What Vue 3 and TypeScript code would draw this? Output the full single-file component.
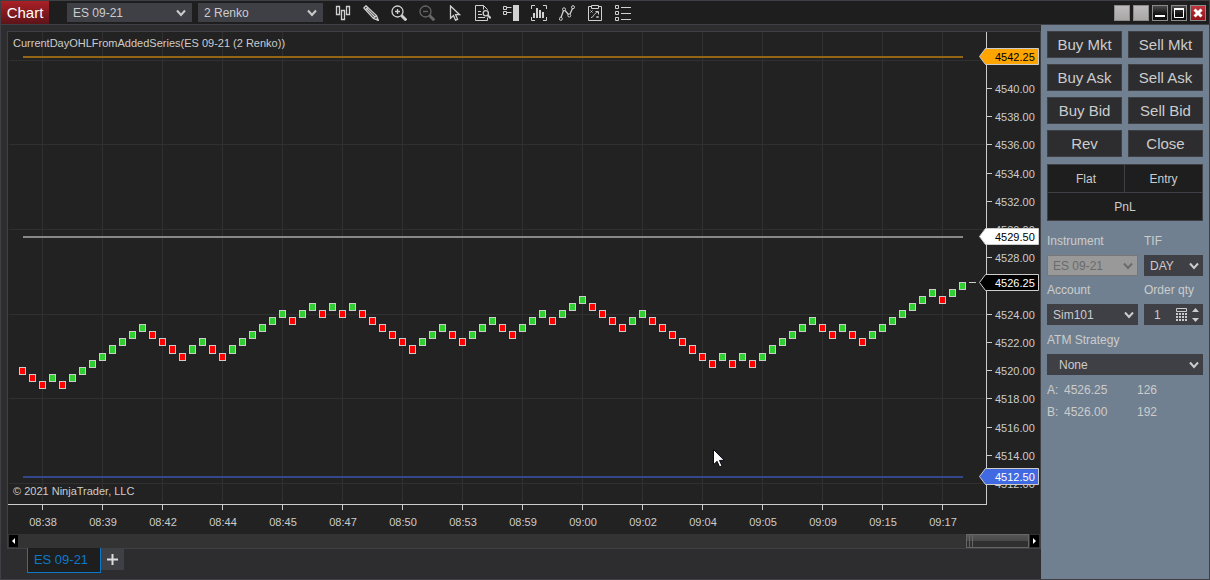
<script setup lang="ts">
import { computed, onBeforeUnmount, onMounted, ref } from 'vue'

interface Brick { x: number; y: number; h: number; up: boolean }
interface Tag { price: number; cls: string }

const host = ref<HTMLDivElement | null>(null)
const width = ref(1032)
const height = ref(502)
let observer: ResizeObserver | undefined

function measure() {
  if (!host.value) return
  width.value = host.value.clientWidth
  height.value = host.value.clientHeight
}
onMounted(() => {
  measure()
  observer = new ResizeObserver(measure)
  if (host.value) observer.observe(host.value)
})
onBeforeUnmount(() => observer?.disconnect())

const axisX = computed(() => width.value - 54)
const axisY = computed(() => height.value - 30)

// Visible price range: 4544 at the top of the plot, 33.44 points tall
const topPrice = 4544
const span = 33.44
const yOf = (price: number) => Math.floor(((topPrice - price) / span) * axisY.value)

// Length of each run of bricks; the sign gives its direction
const runs = [-2, 1, -1, 8, -4, 2, -2, 6, -1, 2, -1, 1, -1, 1, -6, 3, -2, 3, -2, 3, -1, 3, -4, 2, -7, 1, -1, 1, -1, 6, -2, 1, -2, 7, -1, 2]
const steps = [-1, ...runs.flatMap((n) => Array<number>(Math.abs(n)).fill(Math.sign(n)))]

const bricks = computed<Brick[]>(() => {
  const first = axisX.value - 24 - (steps.length - 1) * 10
  let level = 1
  return steps.map((step, i) => {
    level += step
    const bottom = yOf(4519.755 + level * 0.5)
    const top = yOf(4520.255 + level * 0.5)
    return { x: first + i * 10, y: top, h: bottom - top, up: step > 0 }
  })
})

const times = ['08:38', '08:39', '08:42', '08:44', '08:45', '08:47', '08:50', '08:53', '08:59', '09:00', '09:02', '09:04', '09:05', '09:09', '09:15', '09:17']
const ticks = computed(() => times.map((label, i) => ({ label, x: axisX.value - 44 - (times.length - 1 - i) * 60 })))
const gridPrices = [4542, 4536, 4530, 4524, 4518, 4512]
const levels: Tag[] = [
  { price: 4542.25, cls: 'high' },
  { price: 4529.5, cls: 'open' },
  { price: 4512.5, cls: 'low' },
]
const lastPrice = 4526.25
const tags: Tag[] = [...levels, { price: lastPrice, cls: 'last' }]
// The label beneath the last-price tag is left out
const prices = Array.from({ length: 15 }, (_, i) => 4540 - i * 2).filter((p) => Math.abs(p - lastPrice) > 0.3)

const orders = ['Buy Mkt', 'Sell Mkt', 'Buy Ask', 'Sell Ask', 'Buy Bid', 'Sell Bid', 'Rev', 'Close']
const quantity = ref('1')
</script>

<template>
  <main class="window">
    <header class="titlebar">
      <h1 class="title">Chart</h1>
      <span class="select head">
        <select aria-label="Chart instrument"><option>ES 09-21</option></select>
        <svg class="chev" viewBox="0 0 10 8"><path d="M1 1.5 5 6 9 1.5" /></svg>
      </span>
      <span class="select head">
        <select aria-label="Interval"><option>2 Renko</option></select>
        <svg class="chev" viewBox="0 0 10 8"><path d="M1 1.5 5 6 9 1.5" /></svg>
      </span>
      <nav class="tools">
        <button aria-label="Chart style">
          <svg viewBox="0 0 16 16"><path class="bold" d="M1.5 1.5h3v8h-3zM6.5 5.5h3v9h-3zM11.5 1.5h3v8h-3z" /></svg>
        </button>
        <button aria-label="Drawing tools">
          <svg viewBox="0 0 16 16"><path class="bold" d="M.8 3 3 .8 13.5 10.5 15.3 15.3 10.5 13.5zM2.5 4.8 4.8 2.5M10.5 13.5 13.5 10.5M4 4 12 12" /><path class="fill" d="m13 13 3 3-3.6-1.2z" /></svg>
        </button>
        <button aria-label="Zoom in">
          <svg viewBox="0 0 16 16"><circle class="bold" cx="6.5" cy="6.5" r="5.5" /><path class="bold" d="M6.500 4v5M4 6.500h5" /><path class="thick" d="m10.500 10.500 4.800 4.800" /></svg>
        </button>
        <button aria-label="Zoom out" class="dim">
          <svg viewBox="0 0 16 16"><circle class="bold" cx="6.5" cy="6.5" r="5.5" /><path class="bold" d="M4 6.500h5" /><path class="thick" d="m10.500 10.500 4.800 4.800" /></svg>
        </button>
        <button aria-label="Cursor">
          <svg viewBox="0 0 16 16"><path class="bold" d="M3.500 1v12.200l3-2.700 2 4.700 2.100-.9-2-4.600h4z" /></svg>
        </button>
        <button aria-label="Data box">
          <svg viewBox="0 0 16 16"><path d="M12.500 5V4.500l-4-4h-8v15h12v-3M8.500.5v4M3 6.500h3M3 9.500h4M3 12.500h7" /><circle class="bold" cx="10.800" cy="8.300" r="2.600" /><path class="mid" d="m12.700 10.200 3 3" /></svg>
        </button>
        <button aria-label="Chart trader">
          <svg viewBox="0 0 16 16"><path d="M.5 1.500h3v3h-3zM.5 6.500h3v3h-3zM3.500 2.500h5M3.500 7.500h5" /><path class="fill" d="M10 0h6v16h-6z" /></svg>
        </button>
        <button aria-label="Data series">
          <svg viewBox="0 0 16 16"><path d="M.5 4V.5H4M12 .5h3.500V4M.5 12v3.500H4M12 15.500h3.500V12" /><path class="fill" d="M2 8h2v5H2zM5 3h2v10H5zM8 5h2v8H8zM11 7h2v6h-2z" /></svg>
        </button>
        <button aria-label="Indicators">
          <svg viewBox="0 0 16 16"><path class="bold" d="m2 12.500 2.500-7M6 5.500l3.500 4M11 9l2.500-5.500" /><circle cx="1.800" cy="13.800" r="1.500" /><circle cx="5" cy="4.300" r="1.500" /><circle cx="10.300" cy="10.500" r="1.500" /><circle cx="14" cy="2.200" r="1.500" /></svg>
        </button>
        <button aria-label="Strategies">
          <svg viewBox="0 0 16 16"><path d="M4.500 1.500h-3v14h13v-14h-3M4.500.5h7v3h-7zM3.500 5.500l2 2M5.500 5.500l-2 2M9.500 11l2 2M11.500 11l-2 2M4 12.500c3 0 2-4 7-5.500M8.500 6.500h3v3" /></svg>
        </button>
        <button aria-label="Properties">
          <svg viewBox="0 0 16 16"><path d="M.5.5h3v3h-3zM.5 6.500h3v3h-3zM.5 12.500h3v3h-3zM6 2.500h10M6 8.500h10M6 14.500h10" /></svg>
        </button>
      </nav>
      <div class="winbtns">
        <button class="plain" aria-label="Link instrument"></button>
        <button class="plain" aria-label="Link interval"></button>
        <button class="dark" aria-label="Minimize"><svg viewBox="0 0 14 14"><path d="M2 10h10" /></svg></button>
        <button class="dark" aria-label="Maximize"><svg viewBox="0 0 14 14"><path class="thin" d="M2.500 3.500h9v8h-9z" /><path d="M2 3h10" /></svg></button>
        <button class="close" aria-label="Close window"><svg viewBox="0 0 14 14"><path d="m3.500 3.500 7 7M10.500 3.500l-7 7" /></svg></button>
      </div>
    </header>

    <div class="body">
      <section class="left">
        <div class="frame">
          <div ref="host" class="chart">
            <svg :width="width" :height="height" role="img" aria-label="Price chart">
              <g class="grid">
                <rect v-for="p in gridPrices" :key="p" x="1" :y="yOf(p)" :width="axisX - 2" height="1" />
                <rect v-for="t in ticks" :key="t.label" :x="t.x" y="0" width="1" :height="axisY - 2" />
              </g>
              <rect v-for="l in levels" :key="l.cls" :class="['level', l.cls]" x="15" :y="yOf(l.price)" :width="axisX - 38" height="2" />
              <rect v-for="(b, i) in bricks" :key="i" :class="b.up ? 'up' : 'down'" :x="b.x - 2.5" :y="b.y + 0.5" width="6" :height="b.h" />
              <g class="axis">
                <rect :x="axisX" y="0" width="1" :height="axisY + 1" />
                <rect x="0" :y="axisY" :width="axisX + 1" height="1" />
                <rect v-for="t in ticks" :key="t.label" :x="t.x" :y="axisY" width="1" height="6" />
                <rect v-for="p in prices" :key="p" :x="axisX" :y="yOf(p)" width="6" height="1" />
                <rect :x="axisX - 17" :y="yOf(lastPrice)" width="7" height="1" />
              </g>
              <g class="label">
                <text x="5" y="15">CurrentDayOHLFromAddedSeries(ES 09-21 (2 Renko))</text>
                <text x="5" :y="axisY - 9">© 2021 NinjaTrader, LLC</text>
                <text v-for="t in ticks" :key="t.label" :x="t.x + 1" :y="axisY + 22" text-anchor="middle">{{ t.label }}</text>
                <text v-for="p in prices" :key="p" :x="axisX + 9" :y="yOf(p) + 5">{{ p.toFixed(2) }}</text>
              </g>
              <g v-for="t in tags" :key="t.cls" :class="['tag', t.cls]" :transform="`translate(${axisX} ${yOf(t.price)})`">
                <path d="M-6.500 .5 -.5-7.500H52.500V8.500H-.5z" />
                <text x="9" y="5">{{ t.price.toFixed(2) }}</text>
              </g>
              <path class="pointer" :transform="`translate(${axisX - 273} ${axisY - 55})`" d="M.5.5v15.200l3.600-3.400 2.500 5.700 2.400-1-2.500-5.600h4.800z" />
            </svg>
          </div>
          <div class="scroll">
            <button aria-label="Scroll left"><svg viewBox="0 0 9 12"><path d="M6 3v6L3 6z" /></svg></button>
            <div class="track"><div class="thumb"></div></div>
            <button aria-label="Scroll right"><svg viewBox="0 0 9 12"><path d="M3 3v6l3-3z" /></svg></button>
          </div>
        </div>
        <div class="tabs">
          <button class="tab">ES 09-21</button>
          <button class="add" aria-label="Add tab"><svg viewBox="0 0 11 11"><path d="M5.500 0v11M0 5.500h11" /></svg></button>
        </div>
      </section>

      <aside class="trader">
        <div class="orders">
          <button v-for="o in orders" :key="o">{{ o }}</button>
        </div>
        <div class="status">
          <span>Flat</span><span>Entry</span><span class="wide">PnL</span>
        </div>
        <form class="form" @submit.prevent>
          <label for="inst">Instrument</label>
          <label for="tif">TIF</label>
          <span class="select off">
            <select id="inst" disabled><option>ES 09-21</option></select>
            <svg class="chev" viewBox="0 0 10 8"><path d="M1 1.500 5 6 9 1.500" /></svg>
          </span>
          <span class="select">
            <select id="tif"><option>DAY</option></select>
            <svg class="chev" viewBox="0 0 10 8"><path d="M1 1.500 5 6 9 1.500" /></svg>
          </span>
          <label for="acct">Account</label>
          <label for="qty">Order qty</label>
          <span class="select">
            <select id="acct"><option>Sim101</option></select>
            <svg class="chev" viewBox="0 0 10 8"><path d="M1 1.500 5 6 9 1.500" /></svg>
          </span>
          <span class="qty">
            <input id="qty" v-model="quantity" type="text" inputmode="numeric" />
            <svg class="calc" viewBox="0 0 11 13"><path class="line" d="M.5.5h10v3H.5z" /><path d="M0 5h2v2H0zM3 5h2v2H3zM6 5h2v2H6zM9 5h2v2H9zM0 8h2v2H0zM3 8h2v2H3zM6 8h2v2H6zM9 8h2v2H9zM0 11h2v2H0zM3 11h2v2H3zM6 11h2v2H6zM9 11h2v2H9z" /></svg>
            <svg class="spin" viewBox="0 0 7 14"><path d="M0 4 3.500 0 7 4zM0 10l3.500 4L7 10z" /></svg>
          </span>
        </form>
        <div class="strategy">
          <label for="atm">ATM Strategy</label>
          <span class="select indent">
            <select id="atm"><option>None</option></select>
            <svg class="chev" viewBox="0 0 10 8"><path d="M1 1.500 5 6 9 1.500" /></svg>
          </span>
        </div>
        <div class="quotes">
          <span>A:</span><span>4526.25</span><span>126</span>
          <span>B:</span><span>4526.00</span><span>192</span>
        </div>
      </aside>
    </div>
  </main>
</template>

<style>
body { background: #2d2d30; }
</style>

<style scoped>
.window {
  box-sizing: border-box;
  display: flex;
  flex-direction: column;
  min-height: 100vh;
  border: 1px solid #3f3f46;
  background: #2d2d30;
  color: #ccc;
  font: 12px/16px "Liberation Sans", Arial, sans-serif;
}
button, select, input { box-sizing: border-box; margin: 0; padding: 0; border: 0; border-radius: 0; font: inherit; color: inherit; background: none; }
svg { display: block; }

.titlebar { display: flex; align-items: center; height: 23px; background: #1e1e1e; border-bottom: 1px solid #3f3f46; }
.title { margin: 0 18px 0 0; width: 48px; font-size: 15px; font-weight: 400; line-height: 23px; text-align: center; color: #fff; background: linear-gradient(#ab2027, #5c1418); }
.select { display: grid; grid-template-columns: minmax(0, 1fr) 15px; align-items: center; height: 21px; background: #3f3f46; }
.select select { grid-area: 1 / 1 / 2 / 3; appearance: none; width: 100%; height: 100%; padding: 0 6px; opacity: 1; }
.select.head { grid-template-columns: minmax(0, 1fr) 17px; width: 125px; height: 19px; margin-right: 6px; }
.select.indent select { padding-left: 12px; }
.chev { grid-area: 1 / 2; width: 10px; height: 8px; margin-left: 1px; pointer-events: none; fill: none; stroke: currentColor; stroke-width: 2; }
.off { box-sizing: border-box; background: #999; border: 1px solid #777; color: #6b6b6b; }
.off select { padding-left: 5px; }

.tools { display: flex; }
.tools button { display: grid; place-items: center; width: 28px; height: 20px; color: #d0d0d0; }
.tools svg { width: 16px; height: 16px; fill: none; stroke: currentColor; stroke-width: 1; }
.tools .fill { fill: currentColor; stroke: none; }
.tools .bold { stroke-width: 1.3; }
.tools .thick { stroke-width: 3; }
.tools .mid { stroke-width: 2; }
.tools .dim { color: #666; }

.winbtns { display: flex; gap: 3px; margin: 1px 3px 0 auto; }
.winbtns button { width: 16px; height: 16px; border: 1px solid #8b8b8b; }
.winbtns svg { width: 14px; height: 14px; fill: none; stroke: #fff; stroke-width: 2; }
.winbtns .thin { stroke-width: 1; }
.winbtns .plain { background: linear-gradient(#bdbbbb, #a9a6a6); }
.winbtns .dark { background: linear-gradient(#4a4a4a, #111 60%); }
.winbtns .close { background: linear-gradient(#c0343c, #931219); }
.winbtns .close svg { stroke-width: 3; }

.body { display: flex; flex: 1; }
.left { display: flex; flex: 1; flex-direction: column; min-width: 0; padding: 6px 0 0 6px; }
.frame { display: flex; flex: 1; flex-direction: column; border: 1px solid #3f3f46; background: #222; }
.chart { flex: 1; height: 0; min-height: 300px; overflow: hidden; }
.grid { fill: #303030; }
.axis { fill: #ccc; }
.label, .tag { font-size: 11px; fill: #ccc; }
.level.high { fill: #956516; }
.level.open { fill: #888; }
.level.low { fill: #33468a; }
.up, .down { stroke: #ccc; }
.up { fill: #32cd32; }
.down { fill: #f00; }
.tag path { stroke: #ccc; }
.tag.high path { fill: #ffa500; }
.tag.open path { fill: #fff; }
.tag.low path { fill: #4169e1; }
.tag.last path { fill: #000; }
.tag.high text, .tag.open text { fill: #000; }
.tag.low text, .tag.last text { fill: #fff; }
.pointer { fill: #fff; stroke: #0b0b18; }

.scroll { display: flex; height: 14px; background: #333; }
.scroll button { width: 9px; height: 12px; margin: 1px; background: #000; }
.scroll svg { width: 9px; height: 12px; fill: #fff; }
.track { display: flex; flex: 1; justify-content: flex-end; }
.thumb { box-sizing: border-box; width: 63px; border: 1px solid #666; background: linear-gradient(90deg, transparent 2px, #666 2px 3px, transparent 3px 5px, #666 5px 6px, transparent 6px), linear-gradient(#555, #484848 50%, #303030 50%); }

.tabs { display: flex; align-items: flex-start; height: 31px; margin: -1px 0 0 20px; }
.tab { width: 74px; height: 25px; padding-right: 6px; border: solid #0e78c8; border-width: 0 1px 1px; background: #1e1e1e; color: #0e78c8; font-size: 13px; }
.add { display: grid; place-items: center; width: 23px; height: 22px; background: #3f3f46; }
.add svg { width: 11px; height: 11px; stroke: #ddd; stroke-width: 2; }

.trader { box-sizing: border-box; width: 168px; padding: 6px; background: #708090; }
.orders { display: grid; grid-template-columns: 1fr 1fr; gap: 6px; }
.orders button { height: 27px; border: 1px solid #3f3f46; background: #2d2d30; font-size: 15px; }
.status { display: grid; grid-template-columns: 76px 1fr; gap: 1px; margin-top: 7px; padding: 1px; background: #3f3f46; }
.status span { padding-top: 2px; line-height: 25px; text-align: center; background: #1e1e1e; }
.status .wide { grid-column: span 2; }
.form { display: grid; grid-template-columns: 91px 59px; gap: 6px; margin-top: 12px; }
.qty { display: flex; align-items: center; height: 21px; padding-right: 4px; background: #3f3f46; }
.qty input { flex: 1; min-width: 0; padding-left: 10px; }
.calc { width: 11px; height: 13px; fill: #ccc; }
.calc .line { fill: none; stroke: #ccc; }
.spin { width: 7px; height: 14px; margin-left: 5px; fill: #ccc; }
.strategy { display: grid; gap: 6px; margin-top: 7px; }
.quotes { display: grid; grid-template-columns: 17px 73px 1fr; row-gap: 6px; margin-top: 7px; }
</style>
